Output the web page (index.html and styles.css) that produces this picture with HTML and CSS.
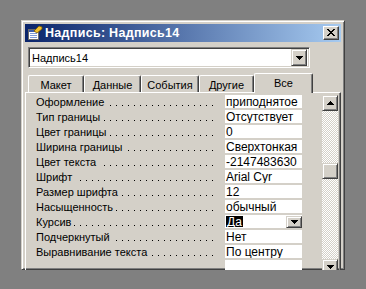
FILE: index.html
```html
<!DOCTYPE html>
<html lang="ru">
<head>
  <meta charset="UTF-8">
  <title>Надпись: Надпись14</title>
  <link rel="stylesheet" href="styles.css">
</head>
<body>
  <div class="window">
    <div class="titlebar">
      <svg class="app-icon" width="16" height="16" viewBox="0 0 16 16">
        <rect x="1.5" y="4.5" width="10" height="10" fill="#fff" stroke="#6b6b6b"/>
        <rect x="2" y="5" width="9" height="2" fill="#3a5ca8"/>
        <rect x="3" y="8" width="7" height="1" fill="#7d9bd6"/>
        <rect x="3" y="10" width="7" height="1" fill="#7d9bd6"/>
        <rect x="3" y="12" width="7" height="1" fill="#7d9bd6"/>
        <path d="M7 6 L12 1 L15 2 L15 4 L10 8 Z" fill="#f2c230" stroke="#7a5a00" stroke-width="0.8"/>
      </svg>
      <span class="title">Надпись: Надпись14</span>
      <div class="close-btn">
        <svg width="8" height="7" viewBox="0 0 8 7">
          <path d="M0 0h2v1H0zM6 0h2v1H6zM1 1h2v1H1zM5 1h2v1H5zM2 2h4v1H2zM3 3h2v1H3zM2 4h4v1H2zM1 5h2v1H1zM5 5h2v1H5zM0 6h2v1H0zM6 6h2v1H6z" fill="#000"/>
        </svg>
      </div>
    </div>

    <div class="combo">
      <span class="combo-text">Надпись14</span>
      <div class="btn3d combo-btn">
        <svg width="7" height="4" viewBox="0 0 7 4"><path d="M0 0h7v1H0zM1 1h5v1H1zM2 2h3v1H2zM3 3h1v1H3z"/></svg>
      </div>
    </div>

    <div class="tabs">
      <div class="tab tab-1">Макет</div>
      <div class="tab tab-2">Данные</div>
      <div class="tab tab-3">События</div>
      <div class="tab tab-4">Другие</div>
      <div class="tab tab-5 active">Все</div>
    </div>

    <div class="panel">
      <div class="list">
        <div class="row"><div class="lead"><span class="name">Оформление</span></div><div class="value">приподнятое</div></div>
        <div class="row"><div class="lead"><span class="name">Тип границы</span></div><div class="value">Отсутствует</div></div>
        <div class="row"><div class="lead"><span class="name">Цвет границы</span></div><div class="value">0</div></div>
        <div class="row"><div class="lead"><span class="name">Ширина границы</span></div><div class="value">Сверхтонкая</div></div>
        <div class="row"><div class="lead"><span class="name">Цвет текста</span></div><div class="value">-2147483630</div></div>
        <div class="row"><div class="lead"><span class="name">Шрифт</span></div><div class="value">Arial Cyr</div></div>
        <div class="row"><div class="lead"><span class="name">Размер шрифта</span></div><div class="value">12</div></div>
        <div class="row"><div class="lead"><span class="name">Насыщенность</span></div><div class="value">обычный</div></div>
        <div class="row"><div class="lead"><span class="name">Курсив</span></div>
          <div class="value value-combo">
            <span class="selected">Да</span>
            <div class="btn3d mini-btn">
              <svg width="7" height="4" viewBox="0 0 7 4"><path d="M0 0h7v1H0zM1 1h5v1H1zM2 2h3v1H2zM3 3h1v1H3z"/></svg>
            </div>
          </div>
        </div>
        <div class="row"><div class="lead"><span class="name">Подчеркнутый</span></div><div class="value">Нет</div></div>
        <div class="row"><div class="lead"><span class="name">Выравнивание текста</span></div><div class="value">По центру</div></div>
        <div class="row"><div class="lead"></div><div class="value"></div></div>
      </div>

      <div class="scrollbar">
        <div class="btn3d sb-btn">
          <svg width="7" height="4" viewBox="0 0 7 4"><path d="M3 0h1v1H3zM2 1h3v1H2zM1 2h5v1H1zM0 3h7v1H0z"/></svg>
        </div>
        <div class="track">
          <div class="btn3d thumb"></div>
        </div>
        <div class="btn3d sb-btn">
          <svg width="7" height="4" viewBox="0 0 7 4"><path d="M0 0h7v1H0zM1 1h5v1H1zM2 2h3v1H2zM3 3h1v1H3z"/></svg>
        </div>
      </div>
    </div>
  </div>
</body>
</html>
```

FILE: styles.css
```css
body {
  margin: 0;
  background: #808080;
  font-family: "Liberation Sans", Arial, sans-serif;
  font-size: 11px;
  color: #000;
}
.window {
  margin: 20px 0 0 21px;
  width: 324px;
  height: 250px;
  box-sizing: border-box;
  background: #d4d0c8;
  border: 1px solid;
  border-color: #d4d0c8 #404040 #404040 #d4d0c8;
  box-shadow: inset 1px 1px #fff, inset -1px -1px #808080;
  padding: 3px;
  display: flex;
  flex-direction: column;
}
.titlebar {
  height: 18px;
  flex: none;
  display: flex;
  align-items: center;
  padding: 0 2px;
  background: linear-gradient(to right, #0a246a, #a6caf0);
  color: #fff;
  font-weight: bold;
  font-size: 12.5px;
  letter-spacing: 0.3px;
}
.app-icon {
  flex: none;
  margin-right: 2px;
}
.title {
  flex: 1;
  white-space: nowrap;
}
.close-btn {
  width: 16px;
  height: 14px;
  box-sizing: border-box;
  border: 1px solid;
  border-color: #fff #404040 #404040 #fff;
  box-shadow: inset -1px -1px #808080;
  background: #d4d0c8;
  display: flex;
  align-items: center;
  justify-content: center;
  padding: 0 1px 1px 0;
}
.close-btn svg {
  display: block;
}
.btn3d {
  box-sizing: border-box;
  background: #d4d0c8;
  border: 1px solid;
  border-color: #d4d0c8 #404040 #404040 #d4d0c8;
  box-shadow: inset 1px 1px #fff, inset -1px -1px #808080;
  display: flex;
  align-items: center;
  justify-content: center;
}
.btn3d svg {
  display: block;
}
.combo {
  margin: 5px 0 0 3px;
  width: 282px;
  height: 21px;
  flex: none;
  box-sizing: border-box;
  background: #fff;
  border: 1px solid;
  border-color: #808080 #fff #fff #808080;
  box-shadow: inset 1px 1px #404040, inset -1px -1px #d4d0c8;
  padding: 2px;
  display: flex;
  align-items: center;
}
.combo-text {
  flex: 1;
  padding-left: 1px;
}
.combo-btn {
  width: 16px;
  height: 17px;
}
.tabs {
  display: flex;
  align-items: flex-end;
  height: 19px;
  flex: none;
  margin-top: 5px;
  padding-left: 3px;
  position: relative;
  z-index: 1;
}
.tab {
  height: 17px;
  box-sizing: border-box;
  border-top: 1px solid #fff;
  border-left: 1px solid #fff;
  border-right: 1px solid #404040;
  border-radius: 2px 2px 0 0;
  box-shadow: inset -1px 0 #808080;
  padding-top: 2px;
  line-height: 14px;
  text-align: center;
  white-space: nowrap;
}
.tab-1 { width: 56px; }
.tab-2 { width: 57px; }
.tab-3 { width: 58px; }
.tab-4 { width: 55px; }
.tab-5 { width: 59px; }
.tab.active {
  height: 20px;
  margin-bottom: -1px;
  background: #d4d0c8;
}
.panel {
  flex: 1;
  display: flex;
  border: 1px solid;
  border-color: #fff #404040 #404040 #fff;
  box-shadow: inset -1px -1px #808080;
  padding: 2px 2px 3px 0;
}
.list {
  flex: 1;
  overflow: hidden;
}
.row {
  display: flex;
  height: 15px;
}
.lead {
  flex: 1;
  margin-right: 8px;
  height: 15px;
  line-height: 15px;
  white-space: nowrap;
  overflow: hidden;
  background: linear-gradient(to right, #000 1px, transparent 1px) 0 10px / 6px 1px repeat-x;
}
.name {
  display: inline-block;
  padding: 0 3px 0 10px;
  background: #d4d0c8;
}
.value {
  width: 77px;
  height: 13px;
  margin-right: 20px;
  box-sizing: border-box;
  background: #fff;
  padding-left: 1px;
  font-size: 12px;
  line-height: 14px;
  white-space: nowrap;
  overflow: hidden;
}
.value-combo {
  display: flex;
  align-items: flex-start;
  justify-content: space-between;
}
.selected {
  background: #000;
  color: #fff;
  height: 11px;
  line-height: 13px;
  margin-top: 1px;
  padding: 0 1px;
}
.mini-btn {
  width: 16px;
  height: 12px;
  margin-top: 1px;
}
.scrollbar {
  width: 16px;
  display: flex;
  flex-direction: column;
}
.sb-btn {
  height: 16px;
  flex: none;
}
.track {
  flex: 1;
  background: repeating-conic-gradient(#fff 0 25%, #d4d0c8 0 50%) 0 0 / 2px 2px;
}
.thumb {
  height: 16px;
  margin-top: 52px;
}
```
